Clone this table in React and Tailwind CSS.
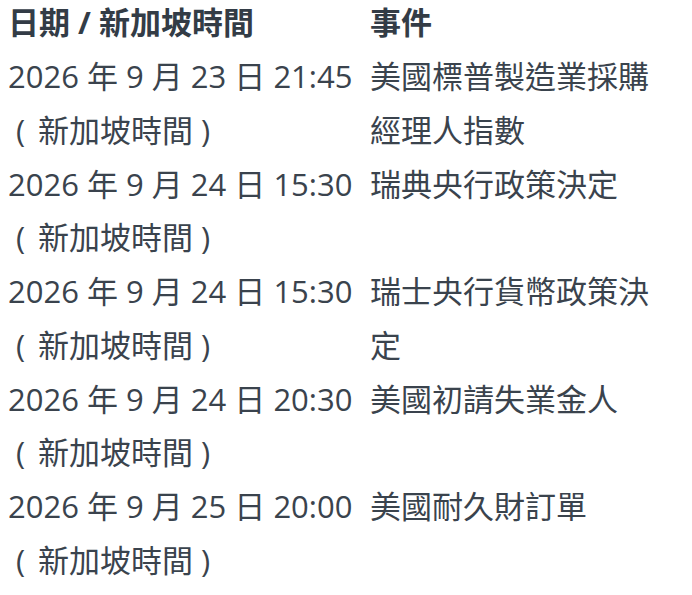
import React from "react";

const EVENTS = [
  { date: "2026 年 9 月 23 日 21:45", name: "美國標普製造業採購經理人指數" },
  { date: "2026 年 9 月 24 日 15:30", name: "瑞典央行政策決定" },
  { date: "2026 年 9 月 24 日 15:30", name: "瑞士央行貨幣政策決定" },
  { date: "2026 年 9 月 24 日 20:30", name: "美國初請失業金人" },
  { date: "2026 年 9 月 25 日 20:00", name: "美國耐久財訂單" },
];

const FONT = {
  fontFamily: '"Open Sans", "Noto Sans CJK TC", sans-serif',
};

const Paren = ({ children }) => (
  <span className="inline-block w-[30px] pl-[8px]">{children}</span>
);

const App = () => {
  return (
    <div
      className="w-[692px] h-[595px] bg-white text-[#3a434d] overflow-hidden"
      style={FONT}
    >
      <div className="grid grid-cols-[354px_290px] gap-x-2 px-2">
        <div className="text-[31px] leading-[44px] pb-[6px] font-bold text-[#333c46]">
          日期 / 新加坡時間
        </div>
        <div className="text-[31px] leading-[44px] pb-[6px] font-bold text-[#333c46]">
          事件
        </div>
        {EVENTS.map((event, index) => (
          <React.Fragment key={index}>
            <div className="text-[31px] leading-[53.75px] h-[107.5px]">
              <div className="whitespace-nowrap">{event.date}</div>
              <div className="whitespace-nowrap">
                <Paren>(</Paren>新加坡時間<Paren>)</Paren>
              </div>
            </div>
            <div className="text-[31px] leading-[53.75px] h-[107.5px]">
              {event.name}
            </div>
          </React.Fragment>
        ))}
      </div>
    </div>
  );
};

export default App;
